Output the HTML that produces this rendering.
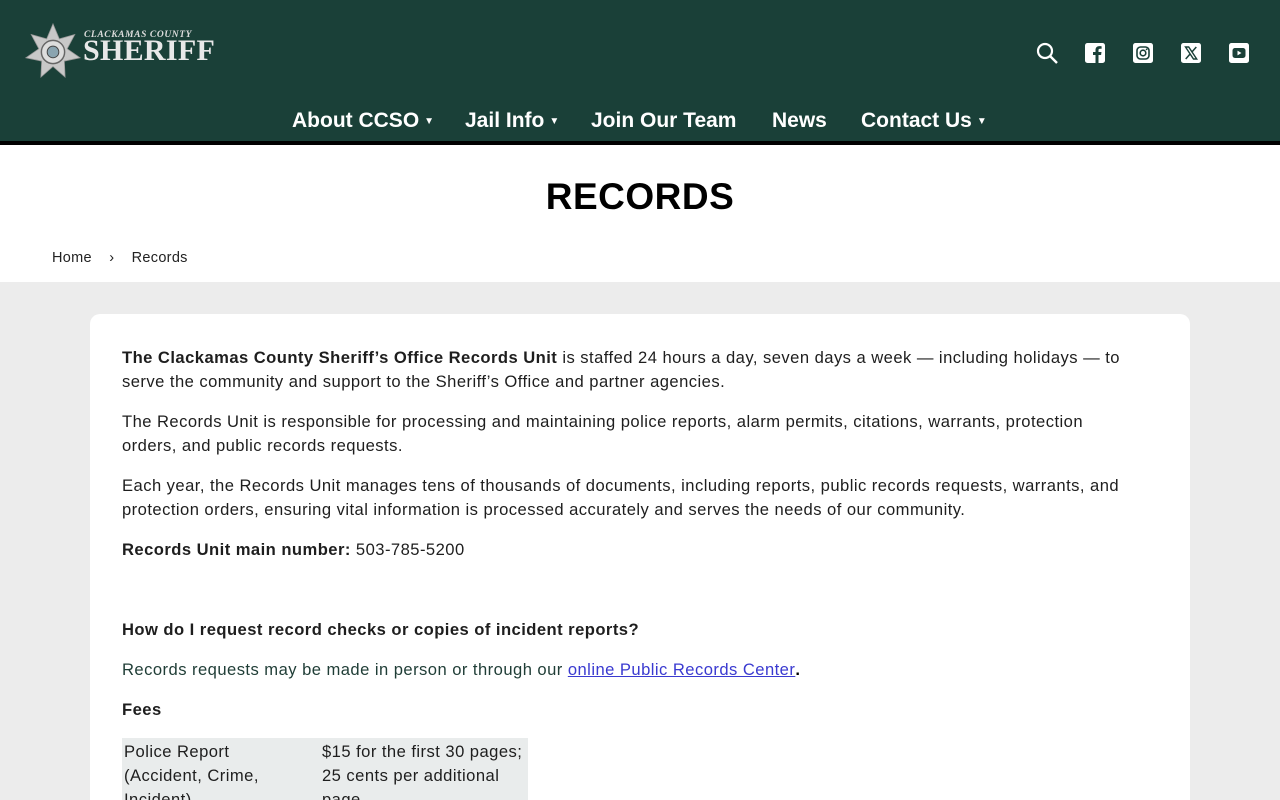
<!DOCTYPE html>
<html><head><meta charset="utf-8"><style>
*{margin:0;padding:0;box-sizing:border-box}
html,body{width:1280px;height:800px;overflow:hidden}
body{font-family:"Liberation Sans",sans-serif;background:#ececec;color:#1e1e1e;position:relative}
header{position:absolute;left:0;top:0;width:1280px;height:145px;background:#1a4038;border-bottom:4px solid #000}
.logo{position:absolute;left:22px;top:20px}
.t1{position:absolute;left:84px;top:30px;font-family:"Liberation Serif",serif;font-style:italic;font-weight:bold;font-size:9.5px;color:#ddd;letter-spacing:.6px}
.t2{position:absolute;left:83px;top:34px;font-family:"Liberation Serif",serif;font-weight:bold;font-size:30px;color:#e8e8e8;letter-spacing:.3px}
.icons{position:absolute;top:42px;right:30px;display:flex;gap:26px}
.icons svg{width:22px;height:22px}
nav{position:absolute;top:109px;left:0;width:1280px;font-size:21px;font-weight:bold;color:#fff}
nav span{position:absolute;top:0;white-space:nowrap}
nav small{font-size:10px;vertical-align:3px;margin-left:5px}
.top{position:absolute;top:145px;left:0;width:1280px;height:137px;background:#fff}
h1{position:absolute;top:31px;width:1280px;text-align:center;font-size:37px;font-weight:900;letter-spacing:.5px;color:#000}
.bc{position:absolute;top:105px;left:52px;font-size:14.5px;color:#222;letter-spacing:.3px}
.card{position:absolute;left:90px;top:314px;width:1100px;height:520px;background:#fff;border-radius:10px;padding:32px 32px;font-size:16.6px;line-height:24px;letter-spacing:.45px}
.card p{margin-bottom:16px}
a{color:#3a3ad0;text-decoration:underline}
table{border-collapse:collapse;background:#e9ecec;margin-top:5px;width:406px}
td{vertical-align:top;padding:2px 2px}
</style></head><body>
<header>
<svg class="logo" width="62" height="62" viewBox="20 19 64 60"><polygon points="52,21 58.5,36.5 74.5,32 66.6,46.7 80,56 63.7,59.4 64.5,76 52,65 39.5,76 40.3,59.4 24,56 37.4,46.7 29.5,32 45.5,36.5" fill="#c8c8c8" stroke="#999" stroke-width=".8"/><circle cx="52" cy="50" r="12" fill="#ddd" stroke="#666" stroke-width="1.5"/><circle cx="52" cy="50" r="6" fill="#8aa4b0" stroke="#444"/></svg>
<div class="t1">CLACKAMAS COUNTY</div>
<div class="t2">SHERIFF</div>
<div class="icons">
<svg viewBox="0 0 22 22"><circle cx="9" cy="9" r="7" fill="none" stroke="#fff" stroke-width="2.2"/><line x1="14" y1="14" x2="21" y2="21" stroke="#fff" stroke-width="2.4"/></svg>
<svg viewBox="0 0 22 22"><rect x="1" y="1" width="20" height="20" rx="2.5" fill="#fff"/><path d="M14.5 21V13h2.6l.4-3h-3V8.2c0-.9.3-1.4 1.5-1.4h1.6V4.2c-.3 0-1.2-.1-2.3-.1-2.3 0-3.8 1.4-3.8 3.9V10H9v3h2.5v8z" fill="#1a4038"/></svg>
<svg viewBox="0 0 22 22"><rect x="1" y="1" width="20" height="20" rx="2.5" fill="#fff"/><rect x="5" y="5" width="12" height="12" rx="3.5" fill="none" stroke="#1a4038" stroke-width="1.6"/><circle cx="11" cy="11" r="2.8" fill="none" stroke="#1a4038" stroke-width="1.6"/><circle cx="14.6" cy="7.4" r=".9" fill="#1a4038"/></svg>
<svg viewBox="0 0 22 22"><rect x="1" y="1" width="20" height="20" rx="2.5" fill="#fff"/><path d="M5.5 5h3.2l8 12h-3.2z" fill="none" stroke="#1a4038" stroke-width="1.4"/><path d="M16.3 5l-4.6 5.2M10.3 11.8L5.7 17" stroke="#1a4038" stroke-width="1.5"/></svg>
<svg viewBox="0 0 22 22"><rect x="1" y="1" width="20" height="20" rx="2.5" fill="#fff"/><rect x="4.5" y="6" width="13" height="10" rx="2.5" fill="#1a4038"/><path d="M9.5 8.6v4.8l4-2.4z" fill="#fff"/></svg>
</div>
<nav>
<span style="left:292px">About CCSO<small>▼</small></span>
<span style="left:465px">Jail Info<small>▼</small></span>
<span style="left:591px">Join Our Team</span>
<span style="left:772px">News</span>
<span style="left:861px">Contact Us<small>▼</small></span>
</nav>
</header>
<div class="top">
<h1>RECORDS</h1>
<div class="bc">Home &nbsp;&nbsp;&nbsp;›&nbsp;&nbsp;&nbsp; Records</div>
</div>
<div class="card">
<p><b>The Clackamas County Sheriff’s Office Records Unit</b> is staffed 24 hours a day, seven days a week — including holidays — to<br>serve the community and support to the Sheriff’s Office and partner agencies.</p>
<p>The Records Unit is responsible for processing and maintaining police reports, alarm permits, citations, warrants, protection<br>orders, and public records requests.</p>
<p>Each year, the Records Unit manages tens of thousands of documents, including reports, public records requests, warrants, and<br>protection orders, ensuring vital information is processed accurately and serves the needs of our community.</p>
<p><b>Records Unit main number:</b> 503-785-5200</p>
<p style="margin-top:56px"><b>How do I request record checks or copies of incident reports?</b></p>
<p style="color:#1f3d36">Records requests may be made in person or through our <a>online Public Records Center</a><b style="color:#000">.</b></p>
<p><b>Fees</b></p>
<table><tr><td style="width:198px">Police Report<br>(Accident, Crime,<br>Incident)</td><td>$15 for the first 30 pages;<br>25 cents per additional<br>page</td></tr></table>
</div>
</body></html>
